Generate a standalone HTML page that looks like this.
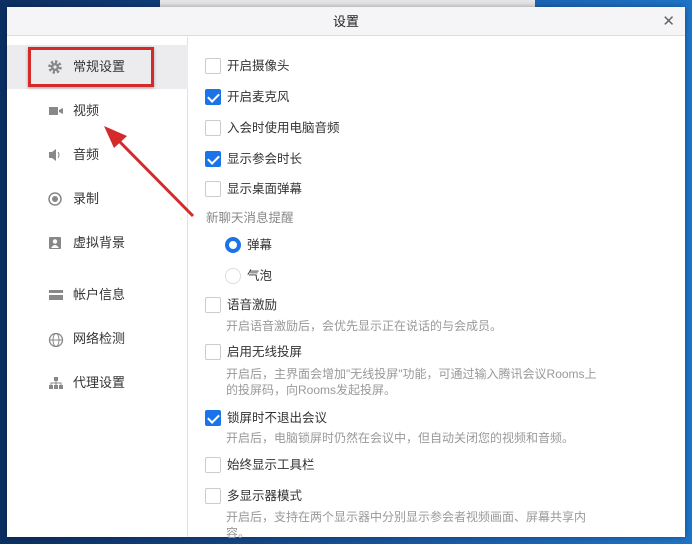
<!DOCTYPE html><html><head><meta charset="utf-8"><style>
*{margin:0;padding:0;box-sizing:border-box}
body{width:692px;height:544px;overflow:hidden;position:relative;background:linear-gradient(90deg,#0c2f63 0,#123e7a 25%,#1a5fae 70%,#1f74c8 100%);font-family:"Liberation Sans","Noto Sans CJK SC",sans-serif}
.topwin{position:absolute;left:160px;top:0;width:375px;height:7px;background:#e6e6e8}
.dlg{position:absolute;left:7px;top:7px;width:678px;height:530px;background:#fff;box-shadow:0 0 6px rgba(0,0,0,.35)}
.title{height:29px;background:#f5f5f7;border-bottom:1px solid #dcdcdc;text-align:center;font-size:13px;line-height:29px;color:#222}
.close{position:absolute;right:10px;top:5px;font-size:15px;color:#666}
.side{position:absolute;left:0;top:30px;width:181px;bottom:0;border-right:1px solid #e2e2e2}
.it{position:absolute;left:0;width:181px;height:44px;font-size:13px;color:#333;line-height:44px}
.it span{position:absolute;left:66px}
.it svg{position:absolute;left:41px;top:15px}
.sel{background:#ececee}
.red{position:absolute;left:21px;top:10px;width:126px;height:40px;border:3px solid #d42a2a;box-shadow:0 1px 3px rgba(0,0,0,.3)}
.t{position:absolute;font-size:12.5px;color:#333;white-space:nowrap;line-height:16px}
.d{position:absolute;font-size:12px;color:#999;white-space:nowrap;line-height:16px}
.cb{position:absolute;width:16px;height:16px;border:1px solid #ccc;border-radius:2px;background:#fff}
.cb.on{background:#1a73e8;border-color:#1a73e8}
.cb.on:after{content:"";position:absolute;left:4px;top:1px;width:5px;height:9px;border:solid #fff;border-width:0 2px 2px 0;transform:rotate(45deg)}
.rd{position:absolute;width:16px;height:16px;border-radius:50%;border:1px solid #ddd}
.rd.on{border:4px solid #1a73e8}
</style></head><body>
<div class="topwin"></div>
<div class="dlg">
<div class="title">设置</div><div class="close">✕</div>
<div class="side">
<div class="it sel" style="top:8px"><svg width="14" height="14" viewBox="0 0 14 14"><circle cx="7" cy="7" r="5" fill="none" stroke="#888" stroke-width="3.5" stroke-dasharray="2.2 1.7"/><circle cx="7" cy="7" r="4" fill="#888"/><circle cx="7" cy="7" r="1.6" fill="#ececee"/></svg><span>常规设置</span></div>
<div class="it" style="top:52px"><svg width="16" height="14"><rect x="1" y="3" width="9" height="8" fill="#888"/><path d="M11 6l4-2v6l-4-2z" fill="#888"/></svg><span>视频</span></div>
<div class="it" style="top:96px"><svg width="16" height="14"><path d="M1 4h3l4-3v12l-4-3H1z" fill="#888"/><path d="M10 4q2 3 0 6" stroke="#888" fill="none"/></svg><span>音频</span></div>
<div class="it" style="top:140px"><svg width="14" height="14"><circle cx="7" cy="7" r="6" stroke="#888" stroke-width="1.5" fill="none"/><circle cx="7" cy="7" r="3" fill="#888"/></svg><span>录制</span></div>
<div class="it" style="top:184px"><svg width="14" height="14"><rect x="1" y="1" width="12" height="12" rx="1" fill="#888"/><circle cx="7" cy="5.5" r="2.2" fill="#fff"/><path d="M3 12q4-6 8 0" fill="#fff"/></svg><span>虚拟背景</span></div>
<div class="it" style="top:236px"><svg width="16" height="14"><rect x="1" y="2" width="14" height="10" fill="#888"/><rect x="1" y="5" width="14" height="2" fill="#fff"/></svg><span>帐户信息</span></div>
<div class="it" style="top:280px"><svg width="16" height="16"><circle cx="8" cy="8" r="6.5" stroke="#888" fill="none" stroke-width="1.3"/><ellipse cx="8" cy="8" rx="3" ry="6.5" stroke="#888" fill="none"/><path d="M1.5 8h13" stroke="#888"/></svg><span>网络检测</span></div>
<div class="it" style="top:324px"><svg width="16" height="14"><rect x="6" y="1" width="4" height="4" fill="#888"/><rect x="1" y="9" width="4" height="4" fill="#888"/><rect x="6" y="9" width="4" height="4" fill="#888"/><rect x="11" y="9" width="4" height="4" fill="#888"/><path d="M3 9V7h10v2M8 5v4" stroke="#888" fill="none"/></svg><span>代理设置</span></div>
<div class="red"></div>
</div>
</div>
<div class="cb" style="left:205px;top:58px"></div><div class="t" style="left:227px;top:58px">开启摄像头</div>
<div class="cb on" style="left:205px;top:89px"></div><div class="t" style="left:227px;top:89px">开启麦克风</div>
<div class="cb" style="left:205px;top:120px"></div><div class="t" style="left:227px;top:120px">入会时使用电脑音频</div>
<div class="cb on" style="left:205px;top:151px"></div><div class="t" style="left:227px;top:151px">显示参会时长</div>
<div class="cb" style="left:205px;top:181px"></div><div class="t" style="left:227px;top:181px">显示桌面弹幕</div>
<div class="t" style="left:206px;top:210px;color:#888">新聊天消息提醒</div>
<div class="rd on" style="left:225px;top:237px"></div><div class="t" style="left:247px;top:237px">弹幕</div>
<div class="rd" style="left:225px;top:268px"></div><div class="t" style="left:247px;top:268px">气泡</div>
<div class="cb" style="left:205px;top:297px"></div><div class="t" style="left:227px;top:297px">语音激励</div>
<div class="d" style="left:226px;top:318px">开启语音激励后，会优先显示正在说话的与会成员。</div>
<div class="cb" style="left:205px;top:344px"></div><div class="t" style="left:227px;top:344px">启用无线投屏</div>
<div class="d" style="left:226px;top:366px">开启后，主界面会增加"无线投屏"功能，可通过输入腾讯会议Rooms上<br>的投屏码，向Rooms发起投屏。</div>
<div class="cb on" style="left:205px;top:410px"></div><div class="t" style="left:227px;top:410px">锁屏时不退出会议</div>
<div class="d" style="left:226px;top:430px">开启后，电脑锁屏时仍然在会议中，但自动关闭您的视频和音频。</div>
<div class="cb" style="left:205px;top:457px"></div><div class="t" style="left:227px;top:457px">始终显示工具栏</div>
<div class="cb" style="left:205px;top:488px"></div><div class="t" style="left:227px;top:488px">多显示器模式</div>
<div class="d" style="left:226px;top:509px">开启后，支持在两个显示器中分别显示参会者视频画面、屏幕共享内<br>容。</div>
<svg style="position:absolute;left:0;top:0" width="692" height="544"><path d="M193 216L118 140" stroke="#d42a2a" stroke-width="3"/><path d="M104 126L127 136L114 148Z" fill="#d42a2a"/></svg>
</body></html>
